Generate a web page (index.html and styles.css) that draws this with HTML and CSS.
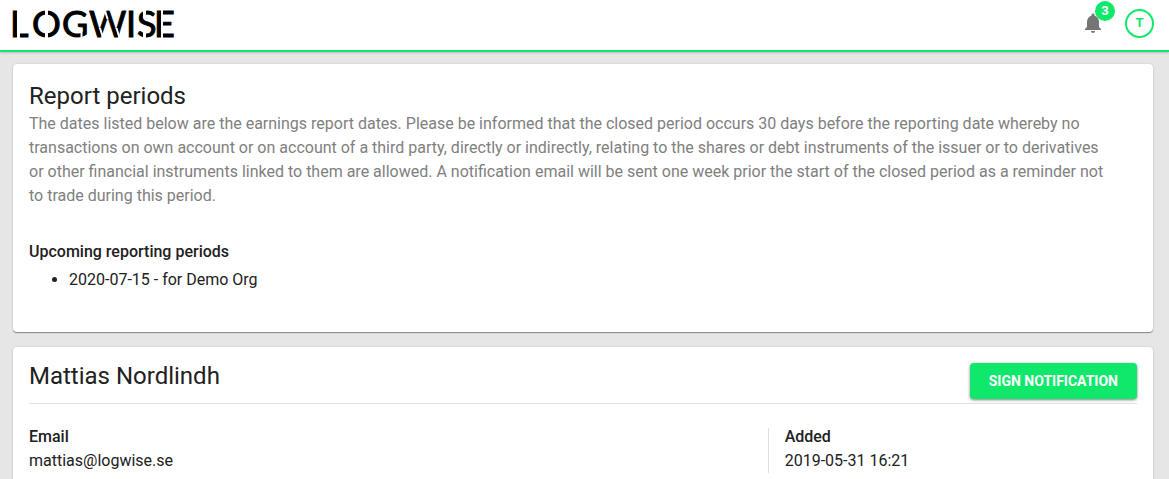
FILE: index.html
```html
<!DOCTYPE html>
<html lang="en">
<head>
<meta charset="utf-8">
<meta name="viewport" content="width=device-width, initial-scale=1">
<title>Logwise</title>
<link rel="stylesheet" href="styles.css">
</head>
<body>
<header class="topbar">
  <a class="brand" href="#" aria-label="Logwise">
    <svg class="logo" width="164" height="30" viewBox="0 0 164 30">
      <text class="logo-text" x="-2 20 50 77 114 125 142" y="28">LOGWISE</text>
      <path class="logo-cuts" d="M5 0h3v30h-3zM33 0h3v30h-3zM68.500 19h2v11h-2zM87 19h2l3 10h-2zM103.500 19h2l3 10h-2zM91.500 0h2l3 10h-2zM131 0h3v9h-3zM131 20h3v10h-3zM149 0h2v30h-2z"/>
    </svg>
  </a>
  <div class="actions">
    <button class="bell" type="button" aria-label="Notifications">
      <svg width="24" height="24" viewBox="0 0 24 24"><path fill="#757575" d="M12 22c1.100 0 2-.9 2-2h-4c0 1.100.89 2 2 2zm6-6v-5c0-3.070-1.640-5.640-4.500-6.320V4c0-.83-.67-1.500-1.500-1.500s-1.500.67-1.500 1.500v.68C7.630 5.360 6 7.920 6 11v5l-2 2v1h16v-1l-2-2z"/></svg>
      <span class="badge">3</span>
    </button>
    <button class="avatar" type="button" aria-label="Account">T</button>
  </div>
</header>
<main class="content">
  <section class="card periods">
    <h1 class="title">Report periods</h1>
    <p class="intro">The dates listed below are the earnings report dates. Please be informed that the closed period occurs 30 days before the reporting date whereby no transactions on own account or on account of a third party, directly or indirectly, relating to the shares or debt instruments of the issuer or to derivatives or other financial instruments linked to them are allowed. A notification email will be sent one week prior the start of the closed period as a reminder not to trade during this period.</p>
    <h2 class="subtitle">Upcoming reporting periods</h2>
    <ul class="dates">
      <li>2020-07-15 - for Demo Org</li>
    </ul>
  </section>
  <section class="card person">
    <div class="person-head">
      <h1 class="title">Mattias Nordlindh</h1>
      <button class="sign" type="button">SIGN NOTIFICATION</button>
    </div>
    <dl class="details">
      <div class="detail">
        <dt>Email</dt>
        <dd>mattias@logwise.se</dd>
      </div>
      <div class="detail">
        <dt>Added</dt>
        <dd>2019-05-31 16:21</dd>
      </div>
    </dl>
  </section>
</main>
</body>
</html>
```
FILE: styles.css
```css
* { box-sizing: border-box; }
body {
  margin: 0;
  background: #e6e6e6;
  color: #212121;
  font: 400 16px/24px Roboto, "Liberation Sans", sans-serif;
}
.topbar {
  display: flex;
  justify-content: space-between;
  align-items: center;
  height: 52px;
  padding: 0 15px 4px 12px;
  background: #fff;
  border-bottom: 2px solid #10e86c;
  box-shadow: 0 1px 2px rgba(0, 0, 0, 0.2);
}
.brand, .logo { display: block; }
.brand { padding-top: 2px; }
.logo { overflow: visible; }
.logo-text { font: 400 36px Lato, sans-serif; fill: #000; stroke: #000; stroke-width: 1; }
.logo-cuts { fill: #fff; }
.actions { display: flex; align-items: center; gap: 20px; }
.bell {
  position: relative;
  display: flex;
  padding: 0;
  border: 0;
  background: none;
}
.badge {
  position: absolute;
  top: -10px;
  right: -10px;
  width: 20px;
  height: 20px;
  border-radius: 50%;
  background: #10e86c;
  color: #fff;
  font: 700 13px/20px Roboto, sans-serif;
}
.avatar {
  width: 29px;
  height: 29px;
  padding: 0;
  border: 2px solid #10e86c;
  border-radius: 50%;
  background: #fff;
  color: #10e86c;
  font: 700 13px/24px Roboto, sans-serif;
}
.content {
  display: flex;
  flex-direction: column;
  gap: 15px;
  padding: 12px 16px 0 13px;
}
.card {
  padding: 16px;
  background: #fff;
  border-radius: 4px;
  box-shadow: 0 1px 1px rgba(0, 0, 0, 0.4), 0 0 3px rgba(0, 0, 0, 0.1);
}
.periods { padding-bottom: 40px; }
.person { padding-bottom: 24px; }
.title { margin: 0; font-size: 24px; font-weight: 400; line-height: 32px; }
.intro { margin: 0 0 32px; padding-right: 24px; color: #808080; }
.subtitle { margin: 0; font-size: 16px; font-weight: 500; line-height: 24px; }
.dates { margin: 4px 0 0; padding-left: 40px; }
.person-head {
  display: flex;
  justify-content: space-between;
  align-items: flex-start;
  height: 41px;
  border-bottom: 1px solid #e0e0e0;
}
.person-head .title { line-height: 26px; }
.sign {
  height: 36px;
  padding: 0 19px;
  border: 0;
  border-radius: 4px;
  background: #10e86c;
  color: #fff;
  font: 700 14px/34px Roboto, sans-serif;
  box-shadow: 0 1px 3px rgba(0, 0, 0, 0.5);
}
.details {
  display: grid;
  grid-template-columns: 2fr 1fr;
  margin: 24px 0 0;
}
.detail + .detail { padding-left: 16px; border-left: 1px solid #e0e0e0; }
.detail dt { font-weight: 500; line-height: 18px; }
.detail dd { margin: 3px 0 0; }
```
